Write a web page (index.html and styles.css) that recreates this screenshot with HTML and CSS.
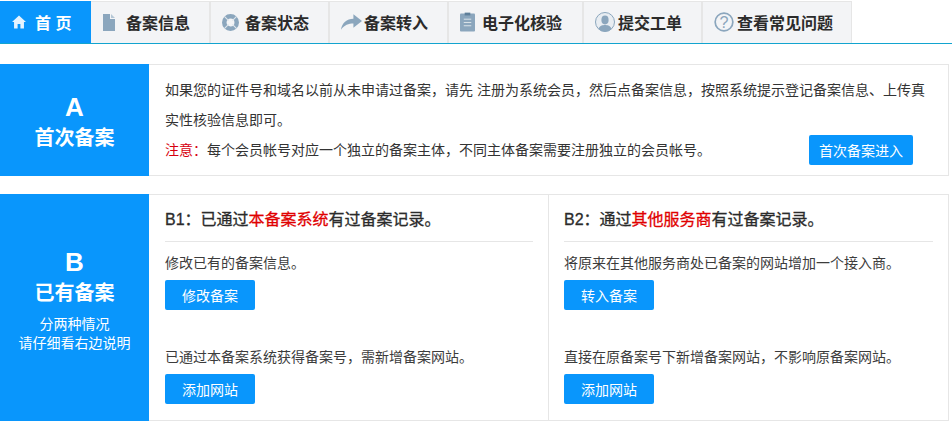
FILE: index.html
```html
<!DOCTYPE html>
<html lang="zh-CN">
<head>
<meta charset="utf-8">
<title>备案</title>
<link rel="stylesheet" href="styles.css">
</head>
<body>
<nav class="tabs">
  <a class="tab tab-home"><svg width="14" height="14" viewBox="0 0 15 14"><path fill="#e4f3ff" d="M7.500 0 15 7h-2.200v7H9V9.200H6V14H2.200V7H0z"/></svg><span>首 页</span></a>
  <a class="tab tab-file"><svg width="12" height="17" viewBox="0 0 12 17"><path fill="#8ba6bd" d="M0 0h7v5h5v12H0z"/><path fill="#b5c7d6" d="M8 0l4 4H8z"/></svg><span>备案信息</span></a>
  <a class="tab tab-ring"><svg width="17" height="17" viewBox="0 0 18 18"><circle cx="9" cy="9" r="6.600" fill="none" stroke="#8ba6bd" stroke-width="4.800"/><path stroke="#dfe6ec" stroke-width="1.200" d="M2.500 2.500l4.500 4.500M15.500 2.500l-4.500 4.500M2.500 15.500l4.500-4.500M15.500 15.500l-4.500-4.500"/></svg><span>备案状态</span></a>
  <a class="tab tab-arrow"><svg width="21" height="16" viewBox="0 0 22 16"><path fill="#8ba6bd" d="M13 0l9 7-9 7V9.500C8 9.500 3.500 11 0 16c1-7 6-11.500 13-11.500z"/></svg><span>备案转入</span></a>
  <a class="tab tab-clip"><svg width="15" height="20" viewBox="0 0 16 20"><rect y="1" width="16" height="19" rx="1" fill="#8ba6bd"/><rect x="5" width="6" height="3" fill="#5f7f9a"/><path stroke="#dfe6ec" d="M4 7h8M4 10.500h8M4 14h8"/></svg><span>电子化核验</span></a>
  <a class="tab tab-user"><svg width="20" height="20" viewBox="0 0 20 20"><circle cx="10" cy="10" r="9.500" fill="#e8edf2" stroke="#8ba6bd"/><ellipse cx="10" cy="8" rx="3.600" ry="4.400" fill="#8ba6bd"/><path fill="#8ba6bd" d="M3.500 17c1-3.500 4-4 6.500-4s5.500 .5 6.500 4A9 9 0 0 1 3.500 17z"/></svg><span>提交工单</span></a>
  <a class="tab tab-help"><svg width="20" height="20" viewBox="0 0 21 21"><circle cx="10.500" cy="10.500" r="9.300" fill="none" stroke="#8ba6bd" stroke-width="1.800"/><text x="10.500" y="16.500" text-anchor="middle" class="q">?</text></svg><span>查看常见问题</span></a>
</nav>

<section class="panel panel-a">
  <div class="side"><b class="letter">A</b><b class="side-title">首次备案</b></div>
  <div class="a-body">
    <p class="line">如果您的证件号和域名以前从未申请过备案，请先 注册为系统会员，然后点备案信息，按照系统提示登记备案信息、上传真实性核验信息即可。</p>
    <div class="a-foot">
      <p class="line"><span class="red">注意：</span>每个会员帐号对应一个独立的备案主体，不同主体备案需要注册独立的会员帐号。</p>
      <a class="btn btn-first">首次备案进入</a>
    </div>
  </div>
</section>

<section class="panel panel-b">
  <div class="side side-b"><b class="letter">B</b><b class="side-title">已有备案</b><span class="side-note">分两种情况<br>请仔细看右边说明</span></div>
  <div class="col col-left">
    <h3 class="col-title">B1：已通过<em>本备案系统</em>有过备案记录。</h3>
    <p class="desc">修改已有的备案信息。</p>
    <a class="btn">修改备案</a>
    <p class="desc desc-2">已通过本备案系统获得备案号，需新增备案网站。</p>
    <a class="btn">添加网站</a>
  </div>
  <div class="col">
    <h3 class="col-title">B2：通过<em>其他服务商</em>有过备案记录。</h3>
    <p class="desc">将原来在其他服务商处已备案的网站增加一个接入商。</p>
    <a class="btn">转入备案</a>
    <p class="desc desc-2">直接在原备案号下新增备案网站，不影响原备案网站。</p>
    <a class="btn">添加网站</a>
  </div>
</section>
</body>
</html>
```
FILE: styles.css
```css
* { box-sizing: border-box; }
html, body { margin: 0; padding: 0; }
body {
  width: 952px;
  height: 422px;
  overflow: hidden;
  background: #fff;
  color: #333;
  font-family: "Liberation Sans", "Noto Sans CJK SC", sans-serif;
  font-size: 14px;
}
p, h3 { margin: 0; }
.tabs {
  display: flex;
  height: 44px;
  padding-top: 1px;
  border-bottom: 1px solid #12a4cf;
}
.tab {
  display: flex;
  align-items: center;
  width: 119px;
  height: 42px;
  padding-left: 11px;
  padding-bottom: 1px;
  background: #f3f4f6;
  border-right: 2px solid #e6e6e6;
  border-top: 1px solid #e6e6e6;
  color: #2b2b2b;
  font-size: 16px;
  font-weight: 700;
  flex: none;
}
.tab-home {
  width: 91px;
  padding-left: 12px;
  gap: 9px;
  background: #0996fc;
  border: 0;
  color: #fff;
}
.tab-file { width: 120px; padding-left: 12px; gap: 11px; }
.tab-ring { gap: 6px; }
.tab-arrow { gap: 2px; }
.tab-clip { width: 135px; gap: 7px; }
.tab-user { gap: 3px; }
.tab-help { width: 149px; gap: 3px; border-right-width: 1px; }
.q { font: 400 17px "Liberation Sans", sans-serif; fill: #8ba6bd; }
.panel {
  display: flex;
  width: 949px;
  border: 1px solid #e6e6e6;
  border-left: 0;
}
.panel-a { height: 112px; margin-top: 20px; }
.panel-b { height: 227px; margin-top: 18px; }
.side {
  flex: 0 0 149px;
  margin: -1px 0;
  background: #0996fc;
  color: #fff;
  display: flex;
  flex-direction: column;
  align-items: center;
  justify-content: center;
  padding-top: 6px;
}
.letter { font-size: 26px; line-height: 30px; }
.side-title { font-size: 20px; line-height: 32px; }
.side-b { padding-top: 0; padding-bottom: 16px; }
.side-note { font-size: 14px; line-height: 19px; text-align: center; margin-top: 6px; }
.a-body { flex: 1; padding: 10px 20px 0 16px; min-width: 0; }
.line { line-height: 30px; font-size: 14px; color: #333; }
.a-foot { display: flex; justify-content: space-between; align-items: center; height: 30px; }
.red { color: #d7000f; }
.btn {
  display: flex;
  align-items: center;
  justify-content: center;
  width: 90px;
  height: 30px;
  border-radius: 2px;
  background: #0996fc;
  color: #fff;
  font-size: 14px;
  flex: none;
}
.btn-first { width: 104px; margin-right: 15px; }
.col { flex: 1; padding: 0 15px; min-width: 0; }
.col-left { flex: 0 0 400px; padding-left: 16px; border-right: 1px solid #e6e6e6; }
.col-title {
  height: 47px;
  padding-top: 13px;
  border-bottom: 1px solid #e6e6e6;
  font-size: 16px;
  font-weight: 400;
  line-height: 24px;
  color: #2b2b2b;
  -webkit-text-stroke: 0.3px #2b2b2b;
}
.col-title em { font-style: normal; color: #e00000; -webkit-text-stroke: 0.3px #e00000; }
.desc { font-size: 14px; line-height: 20px; margin-top: 11px; margin-bottom: 7px; color: #3c3c3c; }
.desc-2 { margin-top: 37px; }
```
